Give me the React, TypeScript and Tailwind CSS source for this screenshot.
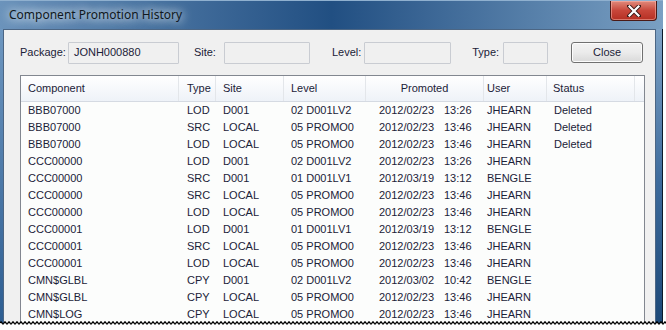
const ROWS = [
  ["BBB07000", "LOD", "D001", "02 D001LV2", "2012/02/23", "13:26", "JHEARN", "Deleted"],
  ["BBB07000", "SRC", "LOCAL", "05 PROMO0", "2012/02/23", "13:46", "JHEARN", "Deleted"],
  ["BBB07000", "LOD", "LOCAL", "05 PROMO0", "2012/02/23", "13:46", "JHEARN", "Deleted"],
  ["CCC00000", "LOD", "D001", "02 D001LV2", "2012/02/23", "13:26", "JHEARN", ""],
  ["CCC00000", "SRC", "D001", "01 D001LV1", "2012/03/19", "13:12", "BENGLE", ""],
  ["CCC00000", "SRC", "LOCAL", "05 PROMO0", "2012/02/23", "13:46", "JHEARN", ""],
  ["CCC00000", "LOD", "LOCAL", "05 PROMO0", "2012/02/23", "13:46", "JHEARN", ""],
  ["CCC00001", "LOD", "D001", "01 D001LV1", "2012/03/19", "13:12", "BENGLE", ""],
  ["CCC00001", "SRC", "LOCAL", "05 PROMO0", "2012/02/23", "13:46", "JHEARN", ""],
  ["CCC00001", "LOD", "LOCAL", "05 PROMO0", "2012/02/23", "13:46", "JHEARN", ""],
  ["CMN$GLBL", "CPY", "D001", "02 D001LV2", "2012/03/02", "10:42", "BENGLE", ""],
  ["CMN$GLBL", "CPY", "LOCAL", "05 PROMO0", "2012/02/23", "13:46", "JHEARN", ""],
  ["CMN$LOG", "CPY", "LOCAL", "05 PROMO0", "2012/02/23", "13:46", "JHEARN", ""],
];

const GRID = "grid grid-cols-[158px_37px_68px_82px_118px_63px_88px_1fr]";

// wavy torn edge along the bottom of the screenshot
function TornEdge() {
  let d = "M0 3";
  for (let x = 0; x < 666; x += 4) {
    d += ` Q${x + 1} 1 ${x + 2} 3 Q${x + 3} 5 ${x + 4} 3`;
  }
  return (
    <svg className="absolute left-0 bottom-0" width="666" height="10" viewBox="0 0 666 10">
      <path d={d + " L666 10 L0 10 Z"} fill="#ffffff" />
      <path d={d} fill="none" stroke="#000000" strokeWidth="1.3" />
    </svg>
  );
}

function Field({ label, value, width, ml, gap }: { label: string; value?: string; width: number; ml: string; gap: string }) {
  return (
    <div className={`flex items-center ${ml}`}>
      <span className={gap}>{label}</span>
      <div
        className="h-[22px] border border-[#c9ccd2] bg-[#f0f0f0] flex items-center pl-[5px] rounded-[1px]"
        style={{ width }}
      >
        {value}
      </div>
    </div>
  );
}

export default function App() {
  return (
    <div className="w-[666px] h-[330px] relative overflow-hidden bg-white font-['Liberation_Sans',Arial,sans-serif] text-[11px] text-[#1b2238]">
      <div className="absolute inset-0 right-[3px] flex flex-col bg-gradient-to-b from-[#3f6d9e] to-[#1d4877]">
        {/* Title bar */}
        <div className="h-[29px] shrink-0 relative flex items-center pl-[9px] bg-gradient-to-r from-[#6b93bb] via-[#214f82] to-[#7aa0c3] border-t border-[#8fb0cf]">
          <span className="font-['Noto_Sans',sans-serif] text-[12px] text-[#101820] [text-shadow:0_0_8px_#ffffff,0_0_12px_#e6eef6] -mt-[1px]">
            Component Promotion History
          </span>
          <div className="absolute right-[6px] top-0 w-[47px] h-[20px] rounded-b-[4px] border border-t-0 border-[#4a1a16] bg-gradient-to-b from-[#e08a7c] via-[#c8463a] to-[#b52f22] flex items-center justify-center shadow-[inset_0_0_0_1px_rgba(255,190,180,0.5)]">
            <svg width="14" height="12" viewBox="0 0 14 12">
              <path d="M2 1 L12 11 M12 1 L2 11" stroke="#3a1a18" strokeWidth="4" strokeLinecap="square" />
              <path d="M2.5 1.5 L11.5 10.5 M11.5 1.5 L2.5 10.5" stroke="#ffffff" strokeWidth="2.2" strokeLinecap="square" />
            </svg>
          </div>
        </div>

        <div className="flex-1 flex">
          {/* left frame */}
          <div className="w-[3px] bg-gradient-to-b from-[#6e97c0] to-[#2a5b90]" />
          {/* client */}
          <div className="flex-1 bg-[#f0f0f0] border-l border-t border-r border-[#4c6684] pl-[16px] pr-[10px] pt-[11px]">
            <div className="flex items-center h-[23px]">
              <Field label="Package:" value="JONH000880" width={111} ml="ml-0" gap="mr-[2px]" />
              <Field label="Site:" width={86} ml="ml-[15px]" gap="mr-[8px]" />
              <Field label="Level:" width={87} ml="ml-[22px]" gap="mr-[3px]" />
              <Field label="Type:" width={45} ml="ml-[21px]" gap="mr-[4px]" />
              <button className="ml-[23px] w-[72px] h-[21px] rounded-[3px] border border-[#707070] bg-gradient-to-b from-[#f2f2f2] via-[#ebebeb] to-[#d9d9d9] shadow-[inset_0_0_0_1px_#fcfcfc] text-[11px] text-[#1b2238]">
                Close
              </button>
            </div>

            {/* List view */}
            <div className="mt-[11px] border border-[#828790] bg-[#fcfdfc] h-[260px] overflow-hidden">
              <div className={`${GRID} h-[26px] bg-gradient-to-b from-[#ffffff] to-[#eef2f8] border-b border-[#d5dae2]`}>
                <div className="pl-[7px] flex items-center border-r border-[#e3e6ea]">Component</div>
                <div className="pl-[8px] flex items-center border-r border-[#e3e6ea]">Type</div>
                <div className="pl-[7px] flex items-center border-r border-[#e3e6ea]">Site</div>
                <div className="pl-[7px] flex items-center border-r border-[#e3e6ea]">Level</div>
                <div className="flex items-center justify-center border-r border-[#e3e6ea]">Promoted</div>
                <div className="pl-[3px] flex items-center border-r border-[#e3e6ea]">User</div>
                <div className="pl-[6px] flex items-center border-r border-[#e3e6ea]">Status</div>
                <div />
              </div>
              {ROWS.map((r, i) => (
                <div key={i} className={`${GRID} h-[17px] items-center`}>
                  <div className="pl-[7px]">{r[0]}</div>
                  <div className="pl-[8px]">{r[1]}</div>
                  <div className="pl-[7px]">{r[2]}</div>
                  <div className="pl-[7px]">{r[3]}</div>
                  <div className="pl-[13px] flex">
                    <span className="w-[65px]">{r[4]}</span>
                    <span>{r[5]}</span>
                  </div>
                  <div className="pl-[3px]">{r[6]}</div>
                  <div className="pl-[7px]">{r[7]}</div>
                  <div />
                </div>
              ))}
            </div>
          </div>
          {/* right frame */}
          <div className="w-[7px] bg-gradient-to-b from-[#7fa3c6] via-[#3d6b9c] to-[#1a4675] border-r border-[#0c1a2a]" />
        </div>
      </div>
      <TornEdge />
    </div>
  );
}
